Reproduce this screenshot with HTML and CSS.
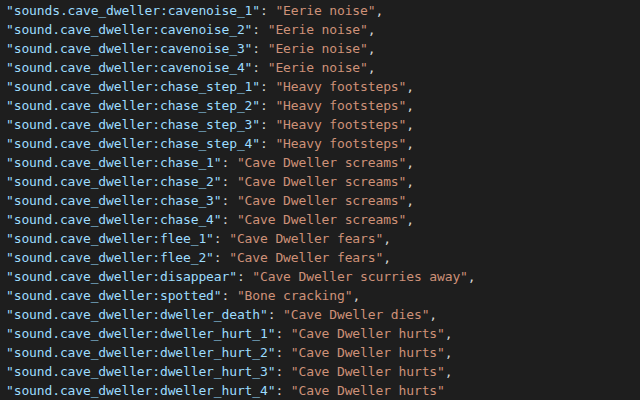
FILE: index.html
```html
<!DOCTYPE html>
<html>
<head>
<meta charset="utf-8">
<link rel="stylesheet" href="styles.css">
</head>
<body>
<div class="editor">
<div class="line"><span class="k">"sounds.cave_dweller:cavenoise_1"</span><span class="p">: </span><span class="s">"Eerie noise"</span><span class="p">,</span></div>
<div class="line"><span class="k">"sound.cave_dweller:cavenoise_2"</span><span class="p">: </span><span class="s">"Eerie noise"</span><span class="p">,</span></div>
<div class="line"><span class="k">"sound.cave_dweller:cavenoise_3"</span><span class="p">: </span><span class="s">"Eerie noise"</span><span class="p">,</span></div>
<div class="line"><span class="k">"sound.cave_dweller:cavenoise_4"</span><span class="p">: </span><span class="s">"Eerie noise"</span><span class="p">,</span></div>
<div class="line"><span class="k">"sound.cave_dweller:chase_step_1"</span><span class="p">: </span><span class="s">"Heavy footsteps"</span><span class="p">,</span></div>
<div class="line"><span class="k">"sound.cave_dweller:chase_step_2"</span><span class="p">: </span><span class="s">"Heavy footsteps"</span><span class="p">,</span></div>
<div class="line"><span class="k">"sound.cave_dweller:chase_step_3"</span><span class="p">: </span><span class="s">"Heavy footsteps"</span><span class="p">,</span></div>
<div class="line"><span class="k">"sound.cave_dweller:chase_step_4"</span><span class="p">: </span><span class="s">"Heavy footsteps"</span><span class="p">,</span></div>
<div class="line"><span class="k">"sound.cave_dweller:chase_1"</span><span class="p">: </span><span class="s">"Cave Dweller screams"</span><span class="p">,</span></div>
<div class="line"><span class="k">"sound.cave_dweller:chase_2"</span><span class="p">: </span><span class="s">"Cave Dweller screams"</span><span class="p">,</span></div>
<div class="line"><span class="k">"sound.cave_dweller:chase_3"</span><span class="p">: </span><span class="s">"Cave Dweller screams"</span><span class="p">,</span></div>
<div class="line"><span class="k">"sound.cave_dweller:chase_4"</span><span class="p">: </span><span class="s">"Cave Dweller screams"</span><span class="p">,</span></div>
<div class="line"><span class="k">"sound.cave_dweller:flee_1"</span><span class="p">: </span><span class="s">"Cave Dweller fears"</span><span class="p">,</span></div>
<div class="line"><span class="k">"sound.cave_dweller:flee_2"</span><span class="p">: </span><span class="s">"Cave Dweller fears"</span><span class="p">,</span></div>
<div class="line"><span class="k">"sound.cave_dweller:disappear"</span><span class="p">: </span><span class="s">"Cave Dweller scurries away"</span><span class="p">,</span></div>
<div class="line"><span class="k">"sound.cave_dweller:spotted"</span><span class="p">: </span><span class="s">"Bone cracking"</span><span class="p">,</span></div>
<div class="line"><span class="k">"sound.cave_dweller:dweller_death"</span><span class="p">: </span><span class="s">"Cave Dweller dies"</span><span class="p">,</span></div>
<div class="line"><span class="k">"sound.cave_dweller:dweller_hurt_1"</span><span class="p">: </span><span class="s">"Cave Dweller hurts"</span><span class="p">,</span></div>
<div class="line"><span class="k">"sound.cave_dweller:dweller_hurt_2"</span><span class="p">: </span><span class="s">"Cave Dweller hurts"</span><span class="p">,</span></div>
<div class="line"><span class="k">"sound.cave_dweller:dweller_hurt_3"</span><span class="p">: </span><span class="s">"Cave Dweller hurts"</span><span class="p">,</span></div>
<div class="line"><span class="k">"sound.cave_dweller:dweller_hurt_4"</span><span class="p">: </span><span class="s">"Cave Dweller hurts"</span></div>
</div>
</body>
</html>
```
FILE: styles.css
```css
html, body {
  margin: 0;
  padding: 0;
  background: #1e1e1e;
  width: 640px;
  height: 400px;
  overflow: hidden;
}
.editor {
  padding: 1px 0 0 6px;
  font-family: "DejaVu Sans Mono", "Liberation Mono", monospace;
  font-size: 13px;
  letter-spacing: -0.13px;
  line-height: 19px;
  color: #d4d4d4;
}
.line {
  height: 19px;
  white-space: pre;
}
.k { color: #9cdcfe; }
.s { color: #ce9178; }
.p { color: #d4d4d4; }
```
